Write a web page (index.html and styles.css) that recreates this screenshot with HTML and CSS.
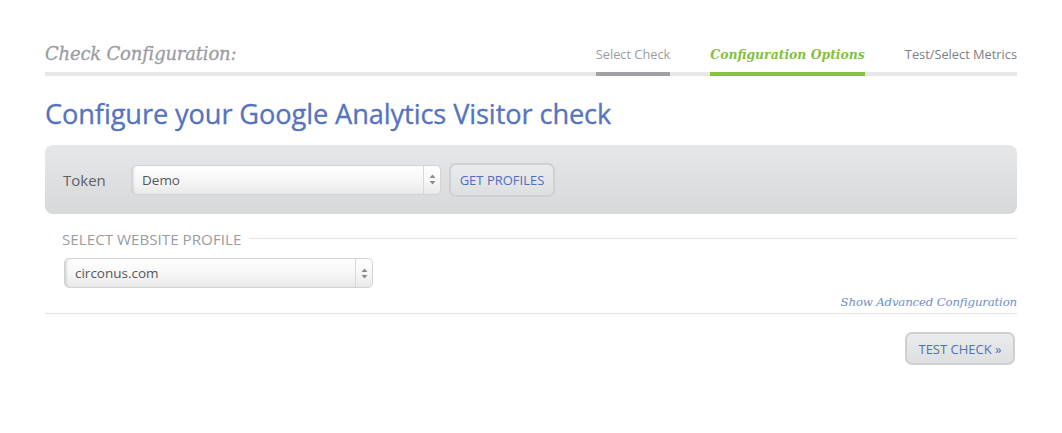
FILE: index.html
```html
<!DOCTYPE html>
<html>
<head>
<meta charset="utf-8">
<link rel="stylesheet" href="styles.css">
</head>
<body>
<div class="page">
  <div class="steps">
    <h2 class="steps-title">Check Configuration:</h2>
    <nav class="tabs">
      <span class="tab done">Select Check</span>
      <span class="tab active">Configuration Options</span>
      <span class="tab">Test/Select Metrics</span>
    </nav>
  </div>

  <h1 class="title">Configure your Google Analytics Visitor check</h1>

  <div class="panel">
    <span class="label">Token</span>
    <div class="select token-select">
      <span class="select-value">Demo</span>
      <span class="select-arrows"><svg width="7" height="11" viewBox="0 0 7 11"><path d="M3.5 0.5 L6.5 4 L0.5 4 Z M3.5 10.5 L6.5 7 L0.5 7 Z" fill="#8a8a8a"/></svg></span>
    </div>
    <button class="btn">GET PROFILES</button>
  </div>

  <div class="section">
    <div class="section-head"><span>SELECT WEBSITE PROFILE</span><span class="rule"></span></div>
    <div class="select profile-select">
      <span class="select-value">circonus.com</span>
      <span class="select-arrows"><svg width="7" height="11" viewBox="0 0 7 11"><path d="M3.5 0.5 L6.5 4 L0.5 4 Z M3.5 10.5 L6.5 7 L0.5 7 Z" fill="#8a8a8a"/></svg></span>
    </div>
    <div class="advanced"><a href="#">Show Advanced Configuration</a></div>
  </div>

  <div class="actions">
    <button class="btn test-btn">TEST CHECK »</button>
  </div>
</div>
</body>
</html>
```
FILE: styles.css
```css
* { box-sizing: border-box; }
html, body { margin: 0; padding: 0; background: #fff; }
body { font-family: "Open Sans", "DejaVu Sans", sans-serif; }

.page { padding: 38px 45px 0 45px; }

.steps {
  display: flex;
  align-items: flex-end;
  justify-content: space-between;
  border-bottom: 4px solid #e6e7e7;
  height: 38px;
}
.steps-title {
  margin: 0 0 8px 0;
  font-family: "DejaVu Serif", Georgia, serif;
  font-style: italic;
  font-weight: normal;
  font-size: 18px;
  color: #9b9ca2;
  letter-spacing: -0.2px;
  -webkit-text-stroke: 0.3px #9b9ca2;
}
.tabs { display: flex; gap: 40px; align-self: stretch; align-items: flex-end; }
.tab {
  font-size: 12.8px;
  color: #7d7e82;
  padding-bottom: 9px;
  margin-bottom: -4px;
  border-bottom: 4px solid transparent;
  line-height: 17px;
}
.tab.done { color: #9a9b9f; border-bottom-color: #a0a1a5; }
.tab.active {
  font-family: "DejaVu Serif", Georgia, serif;
  font-style: italic;
  font-weight: bold;
  color: #84c040;
  font-size: 12.4px;
  border-bottom-color: #86c440;
}

.title {
  margin: 20px 0 0 0;
  font-weight: normal;
  font-size: 27.2px;
  line-height: 36px;
  color: #5573be;
  letter-spacing: -0.1px;
  -webkit-text-stroke: 0.3px #5573be;
}

.panel {
  margin-top: 13px;
  height: 69px;
  border-radius: 8px;
  background: linear-gradient(#e6e7e8, #d7d8da);
  display: flex;
  align-items: center;
  padding-left: 18px;
}
.label { font-size: 15px; color: #606166; width: 68px; }

.select {
  height: 30px;
  border-radius: 5px;
  border: 1px solid #d2d3d5;
  background: linear-gradient(#ffffff 0%, #f6f6f6 55%, #e9e9ea 100%);
  box-shadow: inset 3px 0 3px -2px #c4c5c7;
  display: flex;
  align-items: center;
}
.select-value { flex: 1; padding-left: 10px; font-size: 13.5px; color: #55565a; }
.select-arrows {
  width: 17px;
  align-self: stretch;
  border-left: 1px solid #d8d9db;
  display: flex;
  align-items: center;
  justify-content: center;
}
.token-select { width: 310px; }

.btn {
  font-family: "Open Sans", "DejaVu Sans", sans-serif;
  font-size: 13px;
  color: #4e6fbd;
  background: linear-gradient(#eaebec, #dedfe1);
  border: 2px solid #cfd0d2;
  border-radius: 7px;
  height: 34px;
  padding: 0 6px;
  margin-left: 8px;
  cursor: pointer;
}
.panel .btn { width: 106px; margin-top: 1px; }

.section { padding-left: 17px; }
.section-head {
  display: flex;
  align-items: center;
  margin-top: 16px;
  font-size: 15.2px;
  color: #9b9ca0;
  height: 18px;
}
.section-head .rule { flex: 1; height: 1px; background: #e4e4e4; margin-left: 8px; margin-top: -2px; }
.profile-select { width: 309px; margin-top: 10px; margin-left: 2px; }

.advanced { text-align: right; margin-top: 1px; height: 20px; }
.advanced a {
  font-family: "DejaVu Serif", Georgia, serif;
  font-style: italic;
  font-size: 11.8px;
  color: #6f8fc7;
  text-decoration: none;
  letter-spacing: -0.2px;
}

.actions {
  border-top: 1px solid #e4e4e4;
  margin-top: 4px;
  padding-top: 18px;
  display: flex;
  justify-content: flex-end;
  padding-right: 2px;
}
.test-btn { width: 110px; height: 33px; margin: 0; }
```
